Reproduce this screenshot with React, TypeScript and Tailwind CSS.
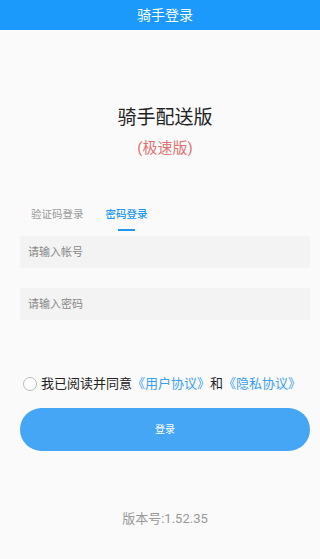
import { useState } from "react";

const FONT = "font-['Roboto','Noto_Sans_CJK_SC',sans-serif]";

export default function App() {
  const [tab, setTab] = useState<"code" | "pwd">("pwd");
  const [agree, setAgree] = useState(false);

  return (
    <div className={`${FONT} w-full min-h-[559px] bg-[#fafafa] overflow-hidden`}>
      <div className="w-[330px]">
        {/* Header */}
        <div className="h-[30px] bg-[#1b9afc] flex items-center justify-center">
          <span className="text-white text-[14px] leading-none">骑手登录</span>
        </div>

        {/* Title */}
        <div className="flex flex-col items-center pt-[76px]">
          <h1 className="text-[19px] leading-[24px] text-[#222]">骑手配送版</h1>
          <p className="mt-[8px] text-[15px] leading-[20px] text-[#e07474]">(极速版)</p>
        </div>

        {/* Tabs */}
        <div className="flex ml-[31px] mt-[49px] gap-[22px]">
          <button
            onClick={() => setTab("code")}
            className={`flex flex-col items-center text-[10.5px] leading-[16px] ${
              tab === "code" ? "text-[#2196f3] font-medium" : "text-[#999]"
            }`}
          >
            验证码登录
            <span
              className={`mt-[6px] h-[2px] w-[17px] ${
                tab === "code" ? "bg-[#2196f3]" : "bg-transparent"
              }`}
            />
          </button>
          <button
            onClick={() => setTab("pwd")}
            className={`flex flex-col items-center text-[10.5px] leading-[16px] ${
              tab === "pwd" ? "text-[#2196f3] font-medium" : "text-[#999]"
            }`}
          >
            密码登录
            <span
              className={`mt-[6px] h-[2px] w-[17px] ${
                tab === "pwd" ? "bg-[#2196f3]" : "bg-transparent"
              }`}
            />
          </button>
        </div>

        {/* Inputs */}
        <div className="mx-5 mt-[5px] flex flex-col gap-[20px]">
          <input
            placeholder="请输入帐号"
            className="h-[32px] bg-[#f3f3f3] px-2 text-[11px] text-[#333] placeholder:text-[#888] outline-none"
          />
          <input
            type="password"
            placeholder={tab === "pwd" ? "请输入密码" : "请输入验证码"}
            className="h-[32px] bg-[#f3f3f3] px-2 text-[11px] text-[#333] placeholder:text-[#888] outline-none"
          />
        </div>

        {/* Agreement */}
        <div className="ml-[23px] mt-[55px] flex items-center text-[13px] leading-[18px] text-[#222]">
          <button
            onClick={() => setAgree(!agree)}
            className={`w-[14px] h-[14px] rounded-full border mr-[4px] ${
              agree ? "border-[#2196f3] bg-[#2196f3]" : "border-[#bbb] bg-white"
            }`}
          />
          <span>我已阅读并同意</span>
          <span className="text-[#3a9ff0]">《用户协议》</span>
          <span>和</span>
          <span className="text-[#3a9ff0]">《隐私协议》</span>
        </div>

        {/* Login button */}
        <div className="mx-5 mt-[15px]">
          <button className="w-full h-[43px] rounded-full bg-[#44a6f5] text-white text-[10px]">
            登录
          </button>
        </div>

        {/* Version */}
        <p className="mt-[59px] text-center text-[13px] leading-[18px] text-[#999]">
          版本号:1.52.35
        </p>
      </div>
    </div>
  );
}
